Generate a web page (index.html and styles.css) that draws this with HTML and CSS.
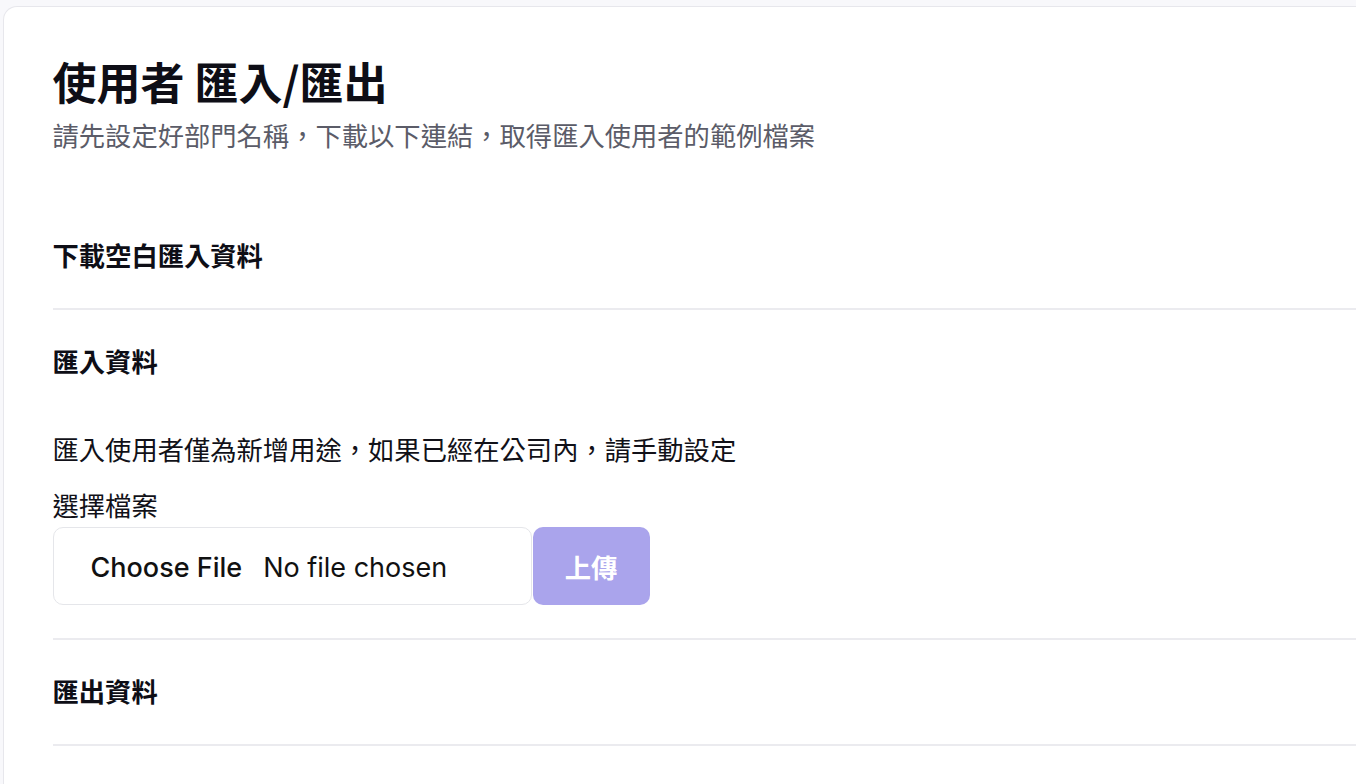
FILE: index.html
```html
<!DOCTYPE html>
<html lang="zh-Hant">
<head>
<meta charset="utf-8">
<title>使用者 匯入/匯出</title>
<link rel="stylesheet" href="styles.css">
</head>
<body>
<main class="card">
  <header class="page-head">
    <h1 class="title">使用者 匯入/匯出</h1>
    <p class="subtitle">請先設定好部門名稱，下載以下連結，取得匯入使用者的範例檔案</p>
  </header>
  <section class="section first">
    <h2 class="section-title">下載空白匯入資料</h2>
  </section>
  <section class="section import">
    <h2 class="section-title">匯入資料</h2>
    <p class="note">匯入使用者僅為新增用途，如果已經在公司內，請手動設定</p>
    <label class="field-label">選擇檔案</label>
    <div class="upload-row">
      <div class="file-box"><span class="file-btn">Choose File</span><span class="file-name">No file chosen</span></div>
      <button class="upload-btn" type="button">上傳</button>
    </div>
  </section>
  <section class="section">
    <h2 class="section-title">匯出資料</h2>
  </section>
</main>
</body>
</html>
```
FILE: styles.css
```css
html, body {
  margin: 0;
  padding: 0;
}
body {
  background: #f8f8fb;
  font-family: "Noto Sans CJK TC", "Noto Sans", sans-serif;
  color: #111118;
  overflow: hidden;
  height: 784px;
}
.card {
  box-sizing: border-box;
  display: block;
  margin: 6px 0 0 3px;
  height: 778px;
  background: #ffffff;
  border: 1.5px solid #e7e7ec;
  border-right: none;
  border-bottom: none;
  border-radius: 14px 0 0 0;
  padding: 46px 0 0 48.5px;
}
.page-head {
  padding-bottom: 84px;
}
.title {
  margin: 0;
  font-size: 44px;
  line-height: 56px;
  font-weight: 700;
  color: #0e0e16;
}
.subtitle {
  margin: 8px 0 0;
  font-size: 26.3px;
  line-height: 36px;
  color: #5b5c68;
}
.section {
  padding: 33px 0 35px;
  border-bottom: 2px solid #ebebef;
}
.section.first {
  padding-top: 0;
}
.section.import {
  padding-bottom: 33px;
}
.section-title {
  margin: 0;
  font-size: 26.3px;
  line-height: 36px;
  font-weight: 700;
  color: #0e0e16;
}
.note {
  margin: 52px 0 0;
  font-size: 26.3px;
  line-height: 36px;
  color: #111118;
}
.field-label {
  display: block;
  margin-top: 20px;
  font-size: 26.3px;
  line-height: 36px;
  color: #111118;
}
.upload-row {
  display: flex;
  margin-top: 4px;
  gap: 1px;
}
.file-box {
  box-sizing: border-box;
  width: 479px;
  height: 78px;
  border: 1.5px solid #e5e6ea;
  border-radius: 10px;
  display: flex;
  align-items: center;
  padding: 2px 0 0 37px;
  font-family: "Inter", "Liberation Sans", sans-serif;
  font-size: 27px;
  color: #111;
}
.file-btn {
  font-weight: 500;
  margin-right: 21px;
}
.upload-btn {
  width: 117px;
  height: 78px;
  border: none;
  border-radius: 10px;
  background: #aaa4ec;
  color: #ffffff;
  font-family: "Noto Sans CJK TC", sans-serif;
  font-size: 26.3px;
  font-weight: 700;
  padding: 0;
}
```
